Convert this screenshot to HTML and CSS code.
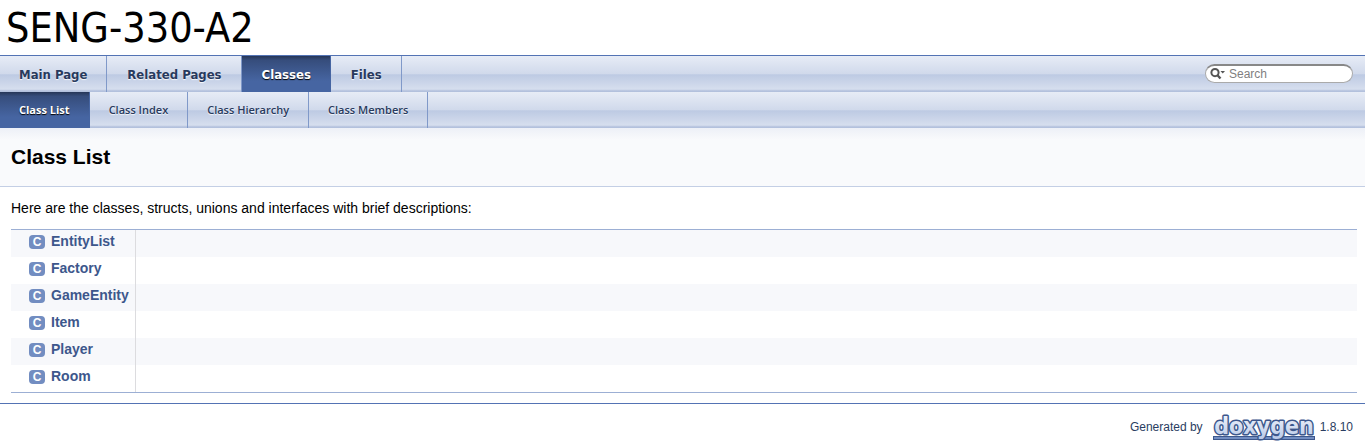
FILE: index.html
```html
<!DOCTYPE html>
<html lang="en">
<head>
<meta charset="utf-8">
<title>SENG-330-A2: Class List</title>
<link rel="stylesheet" href="styles.css">
</head>
<body>
<header class="title">SENG-330-A2</header>
<nav class="tabs main-tabs" aria-label="Main">
  <ul>
    <li><a href="#">Main Page</a></li>
    <li><a href="#">Related Pages</a></li>
    <li class="current"><a href="#">Classes</a></li>
    <li><a href="#">Files</a></li>
  </ul>
  <label class="search">
    <svg width="16" height="12" viewBox="0 0 16 12" aria-hidden="true"><circle cx="5" cy="4.600" r="3.600" fill="none" stroke="#555" stroke-width="2"/><path d="M7.500 7.200L10.500 10.500" stroke="#555" stroke-width="2.400"/><path d="M10.500 3h4.500L12.750 5.500z" fill="#555"/></svg>
    <input type="text" placeholder="Search" aria-label="Search">
  </label>
</nav>
<nav class="tabs sub-tabs" aria-label="Classes">
  <ul>
    <li class="current"><a href="#">Class List</a></li>
    <li><a href="#">Class Index</a></li>
    <li><a href="#">Class Hierarchy</a></li>
    <li><a href="#">Class Members</a></li>
  </ul>
</nav>
<div class="heading"><h1>Class List</h1></div>
<main class="contents">
  <p>Here are the classes, structs, unions and interfaces with brief descriptions:</p>
  <table class="directory">
    <tr><td class="entry"><span class="icon">C</span><a href="#">EntityList</a></td><td class="desc"></td></tr>
    <tr><td class="entry"><span class="icon">C</span><a href="#">Factory</a></td><td class="desc"></td></tr>
    <tr><td class="entry"><span class="icon">C</span><a href="#">GameEntity</a></td><td class="desc"></td></tr>
    <tr><td class="entry"><span class="icon">C</span><a href="#">Item</a></td><td class="desc"></td></tr>
    <tr><td class="entry"><span class="icon">C</span><a href="#">Player</a></td><td class="desc"></td></tr>
    <tr><td class="entry"><span class="icon">C</span><a href="#">Room</a></td><td class="desc"></td></tr>
  </table>
</main>
<footer class="footer">
  <span>Generated by</span>
  <a href="#" class="logo" aria-label="doxygen">
    <svg width="104" height="31" viewBox="0 0 104 31">
      <defs><linearGradient id="fill" x1="0" y1="0" x2="0" y2="1"><stop offset="0" stop-color="#f4f7fc"/><stop offset="1" stop-color="#b9c9e8"/></linearGradient></defs>
      <rect x="1.500" y="22.500" width="101" height="3" fill="#728dc1" stroke="#3d578c"/>
      <text class="logo-text" x="52" y="20" text-anchor="middle" fill="url(#fill)">doxygen</text>
    </svg>
  </a>
  <span>1.8.10</span>
</footer>
</body>
</html>
```
FILE: styles.css
```css
body {
  margin: 0;
  background: #fff;
  color: #000;
  font: 14px/20px "Liberation Sans", Arial, sans-serif;
}
a { text-decoration: none; }
.title {
  padding: 2px 6px 0;
  font: 41px/53px "DejaVu Sans Condensed", Tahoma, sans-serif;
  border-bottom: 1px solid #5373b4;
}
.tabs {
  display: flex;
  align-items: center;
  justify-content: space-between;
  height: 36px;
  background: linear-gradient(#e7ecf6 0%, #d0d9eb 50%, #bdcae3 52%, #d6deee 92%, #b3c1dd 97%);
}
.tabs ul {
  display: flex;
  margin: 0;
  padding: 0;
  list-style: none;
}
.tabs a {
  display: block;
  padding: 0 19px 0 20px;
  border-right: 1px solid #8099c9;
  color: #283a5d;
  font: bold 13px/36px "DejaVu Sans Condensed", "Lucida Grande", sans-serif;
  text-shadow: 0 1px 1px rgba(255, 255, 255, 0.9);
}
.tabs li:first-child a { padding-left: 19px; }
.main-tabs a {
  padding-top: 1px;
  line-height: 35px;
}
.sub-tabs a {
  padding: 0 19px;
  font: 600 11px/36px "Open Sans", "Lucida Grande", sans-serif;
}
.tabs .current a {
  border-right-color: #4665a2;
  background: linear-gradient(#263657 0%, #364d7c 12%, #4665a2 70%, #4665a2 100%);
  color: #fff;
  text-shadow: 0 1px 1px #000;
}
.sub-tabs .current a { font-weight: bold; }
.search {
  display: flex;
  align-items: center;
  box-sizing: border-box;
  width: 148px;
  height: 19px;
  margin: 0 12px 1px 0;
  padding-left: 4px;
  gap: 3px;
  border: 1px solid #aaa;
  border-top: 2px solid #888;
  border-radius: 10px;
  background: #fff;
}
.search input {
  min-width: 0;
  width: 100px;
  padding: 0;
  border: 0;
  outline: 0;
  background: transparent;
  font: 12px/16px "Liberation Sans", Arial, sans-serif;
}
.search input::placeholder { color: #808080; }
.heading {
  padding: 16px 11px;
  border-bottom: 1px solid #c4cfe5;
  background: linear-gradient(#edf0f7, #f9fafc 12px);
}
h1 {
  margin: 0;
  font-size: 21px;
  line-height: 26px;
}
.contents { padding: 11px 8px 10px 11px; }
.contents p { margin: 0 0 11px; }
.directory {
  width: 100%;
  border-collapse: separate;
  border-spacing: 0;
  border-top: 1px solid #9cafd4;
  border-bottom: 1px solid #9cafd4;
}
.directory tr:nth-child(odd) { background: #f7f8fb; }
.directory td {
  height: 27px;
  padding: 0;
}
.directory .entry {
  width: 1px;
  padding: 0 6px 0 18px;
  white-space: nowrap;
  vertical-align: top;
  line-height: 22px;
}
.directory a {
  color: #3d578c;
  font-weight: bold;
}
.desc { border-left: 1px solid #dcdcdf; }
.icon {
  display: inline-block;
  width: 16px;
  height: 14px;
  margin-right: 6px;
  border-radius: 4px;
  background: #728dc1;
  color: #fff;
  font: bold 12px/14px "Liberation Sans", Arial, sans-serif;
  text-align: center;
}
.footer {
  display: flex;
  align-items: center;
  justify-content: flex-end;
  padding: 10px 12px 0 0;
  border-top: 1px solid #5373b4;
  color: #2a3d61;
  font-size: 12px;
  line-height: 16px;
}
.footer > span { padding-bottom: 5px; }
.logo {
  display: block;
  height: 31px;
  margin: 0 4px 0 9px;
}
.logo svg { display: block; }
.logo-text {
  font: bold 23px "DejaVu Sans Condensed", sans-serif;
  stroke: #3d578c;
  stroke-width: 3px;
  stroke-linejoin: round;
  paint-order: stroke;
}
```
